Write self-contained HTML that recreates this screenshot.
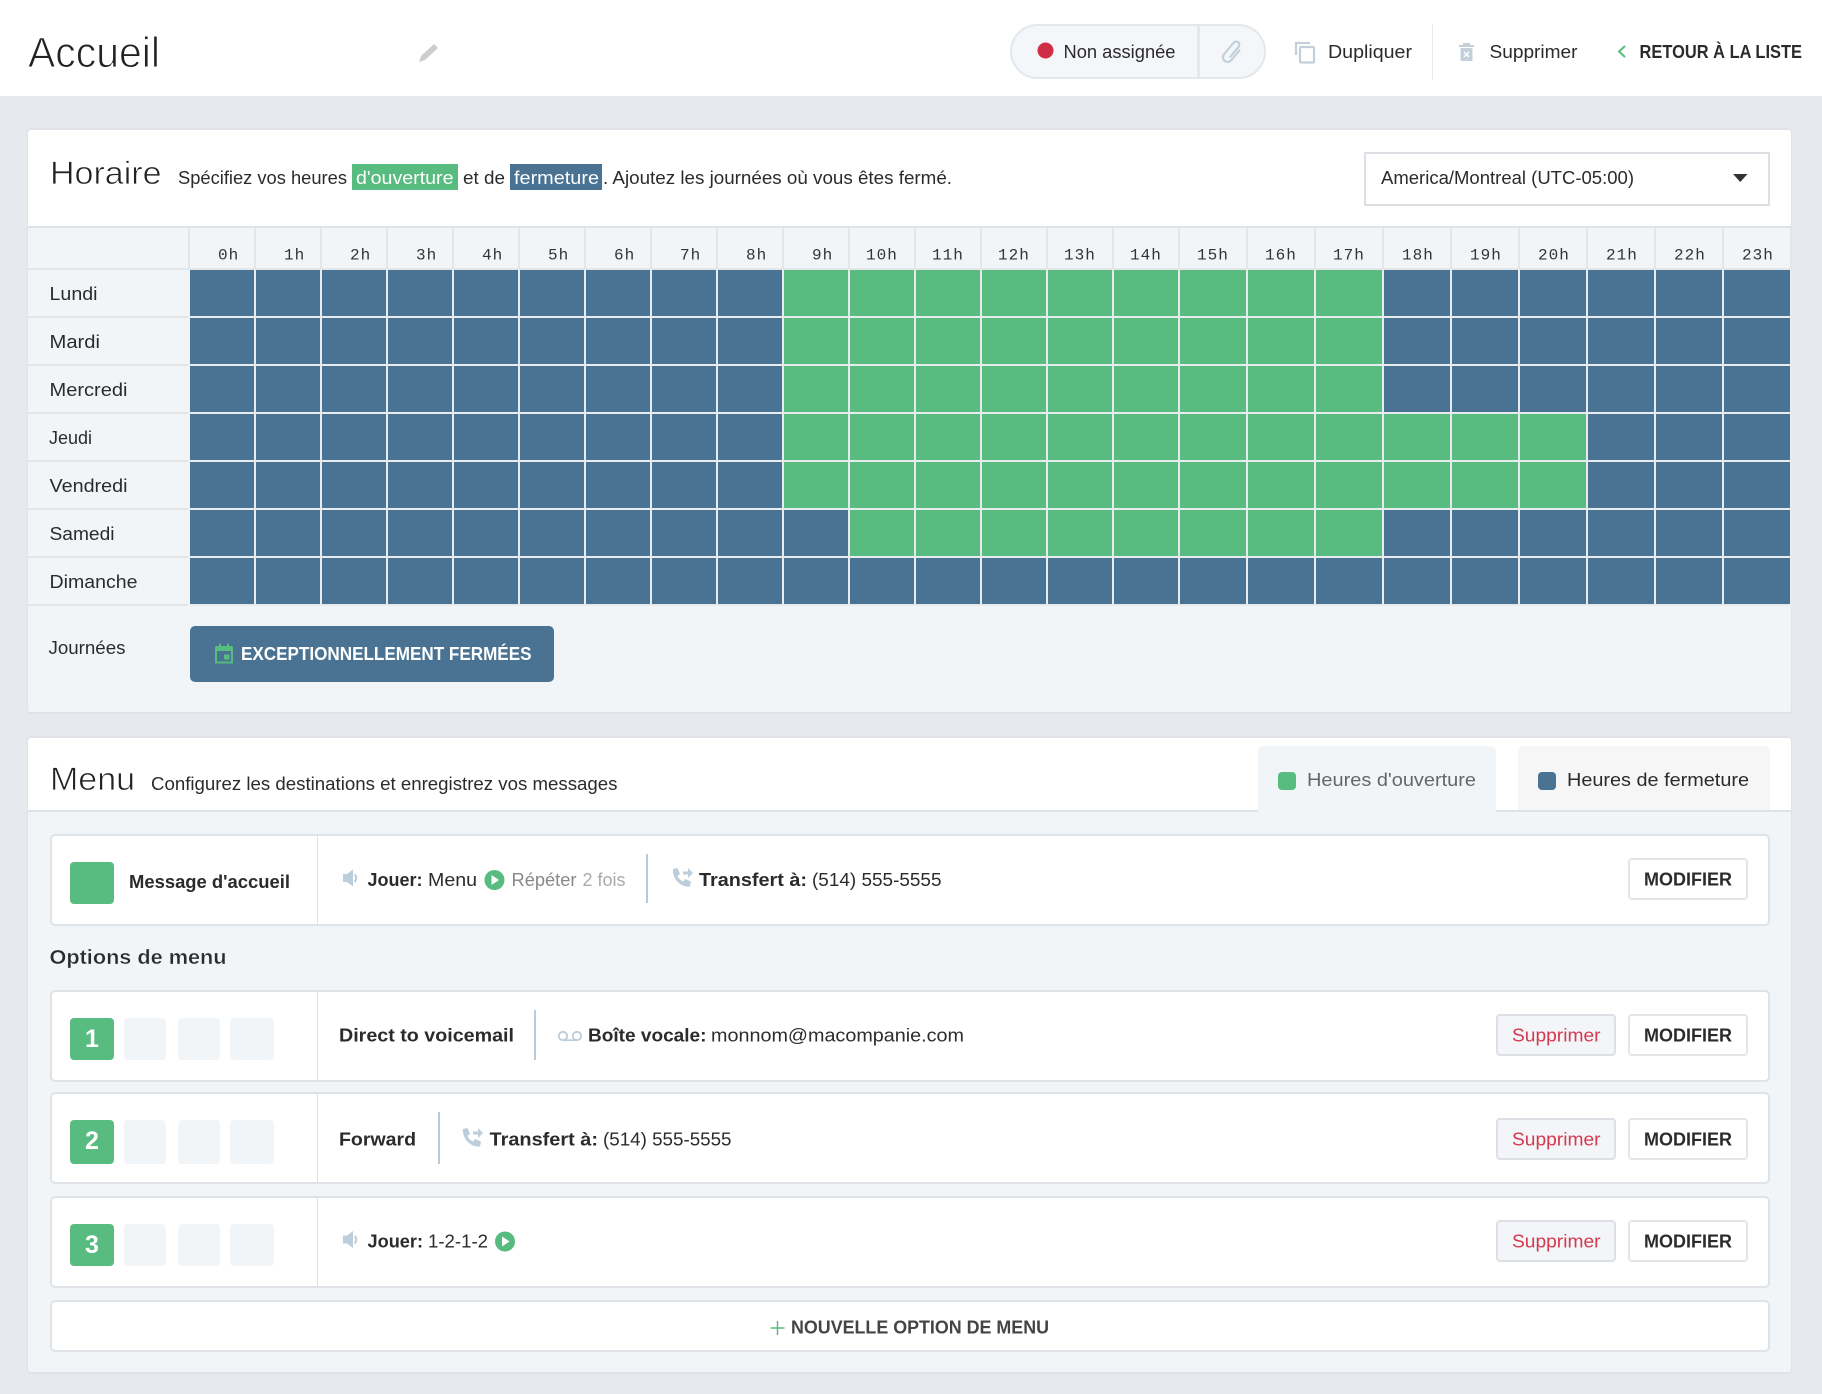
<!DOCTYPE html>
<html lang="fr">
<head>
<meta charset="utf-8">
<title>Accueil</title>
<style>
html,body{margin:0;padding:0}
body{width:1822px;height:1394px;background:#e6e9ed;position:relative;overflow:hidden;font-family:"Liberation Sans",sans-serif}
.a{position:absolute;box-sizing:border-box}
.card{background:#f2f5f8;border:solid #dfe2e6;border-width:2px 1px 2px 1px;border-radius:4px}
.head{background:#fff;border-bottom:2px solid #dfe2e6}
.row{background:#fff;border:2px solid #dfe2e6;border-radius:5px;left:50px;width:1720px}
.dv{width:1px;background:#dfe2e6;left:317px}
.sq{background:#f2f5f8;border-radius:4px}
.gr{background:#58bb7f;border-radius:4px}
.mod{background:#fff;border:2px solid #e4e5e7;border-radius:4px;left:1628px;width:120px;height:42px}
.sup{background:#f3f5f8;border:2px solid #dcdfe3;border-radius:4px;left:1496px;width:120px;height:42px}
.sep{width:2px;background:#b9cad9}
.grid{display:grid;grid-template-columns:repeat(15,66px) repeat(9,68px);grid-auto-rows:48px}
.grid i{display:block;background:#4a7393;border-right:2px solid #e8ebee;border-bottom:2px solid #e8ebee;box-sizing:border-box}
.grid i.g{background:#58bb7f}
.hd{display:grid;grid-template-columns:repeat(15,66px) repeat(9,68px);height:40px}
.hd s{display:block;border-right:2px solid #e4e7ea;box-sizing:border-box;text-decoration:none}
svg{position:absolute;left:0;top:0}
text{font-family:"Liberation Sans",sans-serif;font-size:18px;fill:#2b2b2b}
.b{font-weight:700}
.m{font-family:"Liberation Mono",monospace;font-size:16px;letter-spacing:1px;fill:#333}
.ic{fill:#bccddb}
.lt{fill:#222;stroke:#fff;stroke-width:.55px}
</style>
</head>
<body>
<div class="a" style="left:0;top:0;width:1822px;height:96px;background:#fff"></div>
<div class="a" style="left:1010px;top:24px;width:256px;height:55px;background:#f4f6f9;border:2px solid #e3e8ed;border-radius:28px"></div>
<div class="a" style="left:1197px;top:25px;width:3px;height:53px;background:#e3e8ed"></div>
<div class="a" style="left:1432px;top:24px;width:1px;height:56px;background:#e8e8e8"></div>

<div class="a card" style="left:27px;top:128px;width:1765px;height:586px"></div>
<div class="a head" style="left:28px;top:130px;width:1763px;height:98px;border-radius:3px 3px 0 0"></div>
<div class="a" style="left:1364px;top:152px;width:406px;height:54px;background:#fff;border:2px solid #dcdfe3"></div>
<div class="a" style="left:28px;top:268px;width:1764px;height:2px;background:#e4e7ea"></div>
<div class="a" style="left:188px;top:228px;width:2px;height:42px;background:#e4e7ea"></div>
<div class="a" style="left:28px;top:270px;width:160px;height:336px;background:repeating-linear-gradient(to bottom,transparent 0 46px,#e4e7ea 46px 48px)"></div>
<div class="a hd" style="left:190px;top:228px">
<s></s><s></s><s></s><s></s><s></s><s></s><s></s><s></s><s></s><s></s><s></s><s></s><s></s><s></s><s></s><s></s><s></s><s></s><s></s><s></s><s></s><s></s><s></s><s></s>
</div>
<div class="a grid" style="left:190px;top:270px">
<i></i><i></i><i></i><i></i><i></i><i></i><i></i><i></i><i></i><i class="g"></i><i class="g"></i><i class="g"></i><i class="g"></i><i class="g"></i><i class="g"></i><i class="g"></i><i class="g"></i><i class="g"></i><i></i><i></i><i></i><i></i><i></i><i></i>
<i></i><i></i><i></i><i></i><i></i><i></i><i></i><i></i><i></i><i class="g"></i><i class="g"></i><i class="g"></i><i class="g"></i><i class="g"></i><i class="g"></i><i class="g"></i><i class="g"></i><i class="g"></i><i></i><i></i><i></i><i></i><i></i><i></i>
<i></i><i></i><i></i><i></i><i></i><i></i><i></i><i></i><i></i><i class="g"></i><i class="g"></i><i class="g"></i><i class="g"></i><i class="g"></i><i class="g"></i><i class="g"></i><i class="g"></i><i class="g"></i><i></i><i></i><i></i><i></i><i></i><i></i>
<i></i><i></i><i></i><i></i><i></i><i></i><i></i><i></i><i></i><i class="g"></i><i class="g"></i><i class="g"></i><i class="g"></i><i class="g"></i><i class="g"></i><i class="g"></i><i class="g"></i><i class="g"></i><i class="g"></i><i class="g"></i><i class="g"></i><i></i><i></i><i></i>
<i></i><i></i><i></i><i></i><i></i><i></i><i></i><i></i><i></i><i class="g"></i><i class="g"></i><i class="g"></i><i class="g"></i><i class="g"></i><i class="g"></i><i class="g"></i><i class="g"></i><i class="g"></i><i class="g"></i><i class="g"></i><i class="g"></i><i></i><i></i><i></i>
<i></i><i></i><i></i><i></i><i></i><i></i><i></i><i></i><i></i><i></i><i class="g"></i><i class="g"></i><i class="g"></i><i class="g"></i><i class="g"></i><i class="g"></i><i class="g"></i><i class="g"></i><i></i><i></i><i></i><i></i><i></i><i></i>
<i></i><i></i><i></i><i></i><i></i><i></i><i></i><i></i><i></i><i></i><i></i><i></i><i></i><i></i><i></i><i></i><i></i><i></i><i></i><i></i><i></i><i></i><i></i><i></i>
</div>
<div class="a" style="left:190px;top:626px;width:364px;height:56px;background:#4a7393;border-radius:5px"></div>

<div class="a card" style="left:27px;top:736px;width:1765px;height:638px"></div>
<div class="a head" style="left:28px;top:738px;width:1763px;height:74px;border-radius:3px 3px 0 0"></div>
<div class="a" style="left:1258px;top:746px;width:238px;height:66px;background:#f2f5f8;border-radius:6px 6px 0 0"></div>
<div class="a" style="left:1518px;top:746px;width:252px;height:66px;background:#f6f6f6;border-bottom:2px solid #dfe2e6;border-radius:6px 6px 0 0"></div>
<div class="a gr" style="left:1278px;top:772px;width:18px;height:18px"></div>
<div class="a" style="left:1538px;top:772px;width:18px;height:18px;background:#4a7393;border-radius:4px"></div>

<div class="a row" style="top:834px;height:92px"></div>
<div class="a dv" style="top:834px;height:92px"></div>
<div class="a gr" style="left:70px;top:862px;width:44px;height:42px"></div>
<div class="a sep" style="left:646px;top:854px;height:49px"></div>
<div class="a mod" style="top:858px"></div>

<div class="a row" style="top:990px;height:92px"></div>
<div class="a dv" style="top:990px;height:92px"></div>
<div class="a gr" style="left:70px;top:1018px;width:44px;height:42px"></div>
<div class="a sq" style="left:124px;top:1018px;width:42px;height:42px"></div>
<div class="a sq" style="left:178px;top:1018px;width:42px;height:42px"></div>
<div class="a sq" style="left:230px;top:1018px;width:44px;height:42px"></div>
<div class="a sep" style="left:534px;top:1010px;height:50px"></div>
<div class="a sup" style="top:1014px"></div>
<div class="a mod" style="top:1014px"></div>

<div class="a row" style="top:1092px;height:92px"></div>
<div class="a dv" style="top:1092px;height:92px"></div>
<div class="a gr" style="left:70px;top:1120px;width:44px;height:44px"></div>
<div class="a sq" style="left:124px;top:1120px;width:42px;height:44px"></div>
<div class="a sq" style="left:178px;top:1120px;width:42px;height:44px"></div>
<div class="a sq" style="left:230px;top:1120px;width:44px;height:44px"></div>
<div class="a sep" style="left:438px;top:1112px;height:52px"></div>
<div class="a sup" style="top:1118px"></div>
<div class="a mod" style="top:1118px"></div>

<div class="a row" style="top:1196px;height:92px"></div>
<div class="a dv" style="top:1196px;height:92px"></div>
<div class="a gr" style="left:70px;top:1224px;width:44px;height:42px"></div>
<div class="a sq" style="left:124px;top:1224px;width:42px;height:42px"></div>
<div class="a sq" style="left:178px;top:1224px;width:42px;height:42px"></div>
<div class="a sq" style="left:230px;top:1224px;width:44px;height:42px"></div>
<div class="a sup" style="top:1220px"></div>
<div class="a mod" style="top:1220px"></div>

<div class="a row" style="top:1300px;height:52px"></div>

<div class="a" style="left:352px;top:164px;width:106px;height:26px;background:#58bb7f"></div>
<div class="a" style="left:510px;top:164px;width:92px;height:26px;background:#4a7393"></div>

<svg width="1822" height="1394" viewBox="0 0 1822 1394" xmlns="http://www.w3.org/2000/svg">
<!-- header -->
<text class="lt" x="28" y="67" textLength="132" lengthAdjust="spacingAndGlyphs" style="font-size:43px;stroke-width:1px">Accueil</text>
<path d="M434 44l4 4-13 12-6 2 2-6z" fill="#cdcdcd"/>
<circle cx="1045.5" cy="50.5" r="8" fill="#cf2f44"/>
<text x="1063.5" y="58" textLength="112" lengthAdjust="spacingAndGlyphs">Non assignée</text>
<g transform="translate(1232 52) rotate(40) scale(1.35)" fill="none" stroke="#c3d0dc" stroke-width="1.600"><path d="M3.500-5V5a3.500 3.500 0 0 1-7 0V-6a2.400 2.400 0 0 1 4.800 0V4"/></g>
<path d="M1296 55V43h14" fill="none" stroke="#c3d0dc" stroke-width="2.200"/>
<rect x="1300" y="47" width="14" height="15.500" rx="1" fill="none" stroke="#c3d0dc" stroke-width="2.200"/>
<text x="1328" y="58" textLength="84" lengthAdjust="spacingAndGlyphs">Dupliquer</text>
<path class="ic" d="M1463 43h7v2h4v2h-15v-2h4zM1460.500 48h12v13h-12z" style="fill:#c3d0dc"/>
<path d="M1464 52l5 5m0-5l-5 5" stroke="#fff" stroke-width="1.500"/>
<text x="1489.500" y="58" textLength="88" lengthAdjust="spacingAndGlyphs">Supprimer</text>
<path d="M1625 46l-6 5.500 6 5.500" fill="none" stroke="#58bb7f" stroke-width="2"/>
<text class="b" x="1639.500" y="58" textLength="162.500" lengthAdjust="spacingAndGlyphs">RETOUR À LA LISTE</text>

<!-- horaire head -->
<text class="lt" x="50" y="184" textLength="111.500" lengthAdjust="spacingAndGlyphs" style="font-size:32px;stroke-width:.7px">Horaire</text>
<text x="178" y="184" textLength="169" lengthAdjust="spacingAndGlyphs">Spécifiez vos heures</text>
<text x="356" y="184" textLength="97.500" lengthAdjust="spacingAndGlyphs" style="fill:#fff">d'ouverture</text>
<text x="463" y="184" textLength="42" lengthAdjust="spacingAndGlyphs">et de</text>
<text x="514" y="184" textLength="85" lengthAdjust="spacingAndGlyphs" style="fill:#fff">fermeture</text>
<text x="603" y="184" textLength="349" lengthAdjust="spacingAndGlyphs">. Ajoutez les journées où vous êtes fermé.</text>
<text x="1381" y="184" textLength="253" lengthAdjust="spacingAndGlyphs">America/Montreal (UTC-05:00)</text>
<path d="M1733 174h14.500l-7.250 8z" fill="#333"/>

<!-- hours -->
<text class="m" x="218" y="259.500">0h</text><text class="m" x="284" y="259.500">1h</text><text class="m" x="350" y="259.500">2h</text><text class="m" x="416" y="259.500">3h</text><text class="m" x="482" y="259.500">4h</text><text class="m" x="548" y="259.500">5h</text><text class="m" x="614" y="259.500">6h</text><text class="m" x="680" y="259.500">7h</text><text class="m" x="746" y="259.500">8h</text><text class="m" x="812" y="259.500">9h</text>
<text class="m" x="866" y="259.500">10h</text><text class="m" x="932" y="259.500">11h</text><text class="m" x="998" y="259.500">12h</text><text class="m" x="1064" y="259.500">13h</text><text class="m" x="1130" y="259.500">14h</text><text class="m" x="1197" y="259.500">15h</text><text class="m" x="1265" y="259.500">16h</text><text class="m" x="1333" y="259.500">17h</text><text class="m" x="1402" y="259.500">18h</text><text class="m" x="1470" y="259.500">19h</text><text class="m" x="1538" y="259.500">20h</text><text class="m" x="1606" y="259.500">21h</text><text class="m" x="1674" y="259.500">22h</text><text class="m" x="1742" y="259.500">23h</text>

<!-- days -->
<text x="49.500" y="300" textLength="48" lengthAdjust="spacingAndGlyphs">Lundi</text>
<text x="49.500" y="348" textLength="50.500" lengthAdjust="spacingAndGlyphs">Mardi</text>
<text x="49.500" y="396" textLength="78" lengthAdjust="spacingAndGlyphs">Mercredi</text>
<text x="49" y="444" textLength="43" lengthAdjust="spacingAndGlyphs">Jeudi</text>
<text x="49.500" y="492" textLength="78" lengthAdjust="spacingAndGlyphs">Vendredi</text>
<text x="49.500" y="540" textLength="65" lengthAdjust="spacingAndGlyphs">Samedi</text>
<text x="49.500" y="588" textLength="88" lengthAdjust="spacingAndGlyphs">Dimanche</text>
<text x="48.500" y="654" textLength="77" lengthAdjust="spacingAndGlyphs">Journées</text>

<!-- closed button -->
<path d="M216 647.500h16v15h-16z" fill="none" stroke="#58bb7f" stroke-width="2"/>
<path d="M216 646h16v5h-16z" fill="#58bb7f"/><path d="M219 643.500h2v3h-2zM227 643.500h2v3h-2z" fill="#58bb7f"/>
<rect x="224" y="654.500" width="5.500" height="5" fill="#58bb7f"/>
<text class="b" x="241" y="660" textLength="290.500" lengthAdjust="spacingAndGlyphs" style="fill:#fff">EXCEPTIONNELLEMENT FERMÉES</text>

<!-- menu head -->
<text class="lt" x="50" y="790" textLength="85" lengthAdjust="spacingAndGlyphs" style="font-size:32px;stroke-width:.7px">Menu</text>
<text x="151" y="790" textLength="466.500" lengthAdjust="spacingAndGlyphs">Configurez les destinations et enregistrez vos messages</text>
<text x="1307" y="786" textLength="169" lengthAdjust="spacingAndGlyphs" style="fill:#666">Heures d'ouverture</text>
<text x="1567" y="786" textLength="182" lengthAdjust="spacingAndGlyphs">Heures de fermeture</text>

<!-- greeting row -->
<text class="b" x="129" y="888" textLength="161" lengthAdjust="spacingAndGlyphs">Message d'accueil</text>
<path class="ic" d="M343 874h4l6-4.500v17l-6-4.500h-4z"/><path d="M354.500 874.500a5 5 0 0 1 0 7.500" fill="none" stroke="#bccddb" stroke-width="2"/>
<text class="b" x="367.500" y="886" textLength="55" lengthAdjust="spacingAndGlyphs">Jouer:</text>
<text x="428" y="886" textLength="49" lengthAdjust="spacingAndGlyphs">Menu</text>
<circle cx="494.500" cy="880" r="10" fill="#58bb7f"/><path d="M491.500 875l7.500 5-7.500 5z" fill="#fff"/>
<text x="511.500" y="886" textLength="65" lengthAdjust="spacingAndGlyphs" style="fill:#888">Répéter</text>
<text x="582.500" y="886" textLength="43" lengthAdjust="spacingAndGlyphs" style="fill:#aaa">2 fois</text>
<path class="ic" d="M673 869l4.500-1 2.500 6-2.500 1.800c1 2.700 3 4.700 5.700 5.700l1.800-2.500 6 2.500-1 5c-9.500 1-18-8-17-17.500z"/>
<path class="ic" d="M683 871.500h5v-3.500l5 5-5 5v-3.500h-5z"/>
<text class="b" x="699" y="886" textLength="108" lengthAdjust="spacingAndGlyphs">Transfert à:</text>
<text x="812" y="886" textLength="129.500" lengthAdjust="spacingAndGlyphs">(514) 555-5555</text>
<text class="b" x="1644" y="885.500" textLength="88" lengthAdjust="spacingAndGlyphs">MODIFIER</text>

<text class="b" x="49.500" y="964" textLength="177" lengthAdjust="spacingAndGlyphs" style="font-size:20px;fill:#2b2b2b;stroke:#f2f5f8;stroke-width:.35px">Options de menu</text>

<!-- option 1 -->
<text class="b" x="92" y="1047" text-anchor="middle" style="font-size:25px;fill:#fff">1</text>
<text class="b" x="339" y="1041.500" textLength="175" lengthAdjust="spacingAndGlyphs">Direct to voicemail</text>
<g fill="none" stroke="#bccddb" stroke-width="1.800"><circle cx="563" cy="1036" r="4.200"/><circle cx="577" cy="1036" r="4.200"/><path d="M563 1040.200h14"/></g>
<text class="b" x="588" y="1041.500" textLength="118.500" lengthAdjust="spacingAndGlyphs">Boîte vocale:</text>
<text x="711" y="1041.500" textLength="253" lengthAdjust="spacingAndGlyphs">monnom@macompanie.com</text>
<text x="1512" y="1041.500" textLength="88.500" lengthAdjust="spacingAndGlyphs" style="fill:#d33a4e">Supprimer</text>
<text class="b" x="1644" y="1041.500" textLength="88" lengthAdjust="spacingAndGlyphs">MODIFIER</text>

<!-- option 2 -->
<text class="b" x="92" y="1149" text-anchor="middle" style="font-size:25px;fill:#fff">2</text>
<text class="b" x="339" y="1145.500" textLength="77" lengthAdjust="spacingAndGlyphs">Forward</text>
<path class="ic" d="M463 1129l4.500-1 2.500 6-2.500 1.800c1 2.700 3 4.700 5.700 5.700l1.800-2.500 6 2.500-1 5c-9.500 1-18-8-17-17.500z"/>
<path class="ic" d="M473 1131.500h5v-3.500l5 5-5 5v-3.500h-5z"/>
<text class="b" x="489.500" y="1145.500" textLength="108.500" lengthAdjust="spacingAndGlyphs">Transfert à:</text>
<text x="603" y="1145.500" textLength="128.500" lengthAdjust="spacingAndGlyphs">(514) 555-5555</text>
<text x="1512" y="1145.500" textLength="88.500" lengthAdjust="spacingAndGlyphs" style="fill:#d33a4e">Supprimer</text>
<text class="b" x="1644" y="1145.500" textLength="88" lengthAdjust="spacingAndGlyphs">MODIFIER</text>

<!-- option 3 -->
<text class="b" x="92" y="1253" text-anchor="middle" style="font-size:25px;fill:#fff">3</text>
<path class="ic" d="M343 1235.500h4l6-4.500v17l-6-4.500h-4z"/><path d="M354.500 1236a5 5 0 0 1 0 7.500" fill="none" stroke="#bccddb" stroke-width="2"/>
<text class="b" x="367.500" y="1247.500" textLength="55.500" lengthAdjust="spacingAndGlyphs">Jouer:</text>
<text x="428" y="1247.500" textLength="60" lengthAdjust="spacingAndGlyphs">1-2-1-2</text>
<circle cx="505" cy="1241.500" r="10" fill="#58bb7f"/><path d="M502 1236.500l7.500 5-7.500 5z" fill="#fff"/>
<text x="1512" y="1247.500" textLength="88.500" lengthAdjust="spacingAndGlyphs" style="fill:#d33a4e">Supprimer</text>
<text class="b" x="1644" y="1247.500" textLength="88" lengthAdjust="spacingAndGlyphs">MODIFIER</text>

<!-- new -->
<path d="M777.500 1321v14M770.500 1328h14" stroke="#58bb7f" stroke-width="1.500"/>
<text class="b" x="791" y="1333.500" textLength="258" lengthAdjust="spacingAndGlyphs" style="fill:#444">NOUVELLE OPTION DE MENU</text>
</svg>
</body>
</html>
